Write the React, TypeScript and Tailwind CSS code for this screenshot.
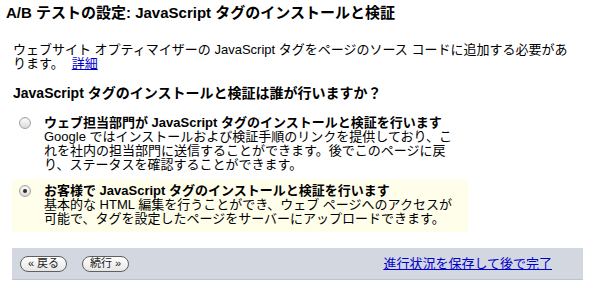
import React from "react";

interface Option {
  id: string;
  label: React.ReactNode;
  lines: string[];
  selected: boolean;
}

const OPTIONS: Option[] = [
  {
    id: "webmaster",
    label: "ウェブ担当部門が JavaScript タグのインストールと検証を行います",
    lines: [
      "Google ではインストールおよび検証手順のリンクを提供しており、こ",
      "れを社内の担当部門に送信することができます。後でこのページに戻",
      "り、ステータスを確認することができます。",
    ],
    selected: false,
  },
  {
    id: "self",
    label: "お客様で JavaScript タグのインストールと検証を行います",
    lines: [
      "基本的な HTML 編集を行うことができ、ウェブ ページへのアクセスが",
      "可能で、タグを設定したページをサーバーにアップロードできます。",
    ],
    selected: true,
  },
];

function Radio({ checked }: { checked: boolean }) {
  return (
    <span className="flex h-[12px] w-[12px] shrink-0 items-center justify-center rounded-full border border-[#a3a3a3] bg-gradient-to-b from-white to-[#d9d9d9] shadow-[inset_0_1px_1px_rgba(0,0,0,0.08)]">
      {checked && <span className="h-[4px] w-[4px] rounded-full bg-[#2b2b2b]" />}
    </span>
  );
}

function PillButton({ children }: { children: React.ReactNode }) {
  return (
    <button className="flex h-[16px] w-[47px] items-center justify-center rounded-full border border-[#5f5f5f] bg-gradient-to-b from-white to-[#e6e6e6] text-[11px] leading-none text-[#222]">
      {children}
    </button>
  );
}

export default function App() {
  return (
    <div className="h-[288px] w-[593px] overflow-hidden bg-white pt-[4px] font-['Liberation_Sans','Noto_Sans_CJK_JP',sans-serif] text-black">
      <h1 className="pl-[6px] text-[15px] font-bold leading-[18px]">
        A/B テストの設定: JavaScript タグのインストールと検証
      </h1>

      <p className="mt-[21px] pl-[13px] text-[13px] leading-[14px]">
        ウェブサイト オプティマイザーの JavaScript タグをページのソース コードに追加する必要があ
        <br />
        ります。
        <a href="#" className="ml-[8px] text-[#0000cc] underline">
          詳細
        </a>
      </p>

      <h2 className="mt-[13px] pl-[13px] text-[14px] font-bold leading-[18px]">
        JavaScript タグのインストールと検証は誰が行いますか？
      </h2>

      <div className="mt-[9px] flex flex-col gap-[1px] pl-[12px]">
        {OPTIONS.map((opt) => (
          <div
            key={opt.id}
            className={`flex w-[456px] gap-[13px] pb-[6px] pl-[7px] pt-[5px] ${
              opt.selected ? "bg-[#fefeeb]" : ""
            }`}
          >
            <div className="flex h-[14px] items-center">
              <Radio checked={opt.selected} />
            </div>
            <div className="text-[13px] leading-[14px]">
              <div className="font-bold">{opt.label}</div>
              {opt.lines.map((line) => (
                <div key={line}>{line}</div>
              ))}
            </div>
          </div>
        ))}
      </div>

      {/* Footer bar */}
      <div className="ml-[12px] mt-[16px] flex h-[32px] w-[571px] items-center justify-between border-b border-[#bfc3cb] bg-[#d3d7e0] pl-[8px] pr-[31px]">
        <div className="flex gap-[15px]">
          <PillButton>« 戻る</PillButton>
          <PillButton>続行 »</PillButton>
        </div>
        <a href="#" className="text-[13px] leading-[14px] text-[#0000cc] underline">
          進行状況を保存して後で完了
        </a>
      </div>
    </div>
  );
}
